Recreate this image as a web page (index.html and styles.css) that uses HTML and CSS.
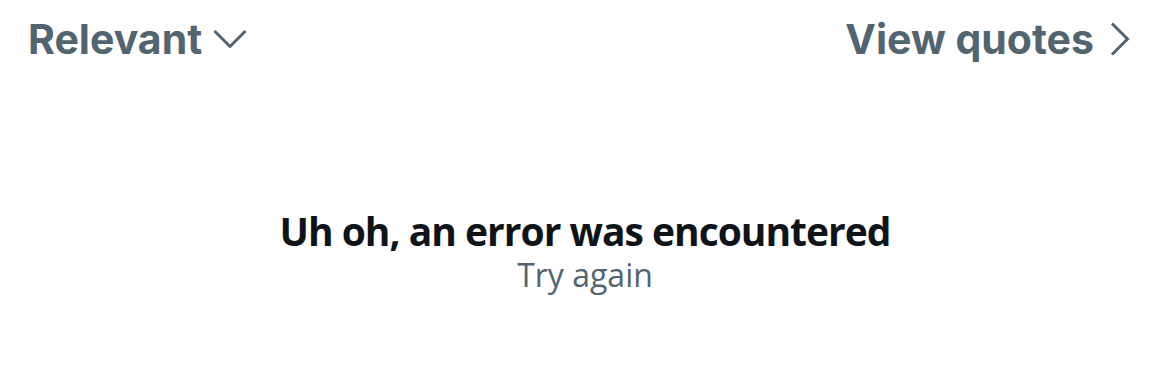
FILE: index.html
```html
<!DOCTYPE html>
<html lang="en">
<head>
    <meta charset="UTF-8">
    <title>Replies</title>
    <link rel="stylesheet" href="styles.css">
</head>
<body>
    <div class="toolbar">
        <button class="sort">
            Relevant
            <svg class="chev" viewBox="0 0 34 20" width="34" height="20"><path d="M1.5 2 L17 17.5 L32.5 2" fill="none" stroke="currentColor" stroke-width="3"/></svg>
        </button>
        <button class="quotes">
            View quotes
            <svg class="chev" viewBox="0 0 20 34" width="20" height="34"><path d="M2 1.5 L17.5 17 L2 32.5" fill="none" stroke="currentColor" stroke-width="3"/></svg>
        </button>
    </div>

    <div class="error">
        <div class="error-title">Uh oh, an error was encountered</div>
        <div class="error-retry">Try again</div>
    </div>
</body>
</html>
```

FILE: styles.css
```css
body {
    margin: 0;
    background: #ffffff;
    font-family: "Inter", "Noto Sans", sans-serif;
}
.toolbar {
    display: flex;
    justify-content: space-between;
    align-items: center;
    padding: 14px 40px 0 28px;
}
.toolbar button {
    display: flex;
    align-items: center;
    background: none;
    border: none;
    padding: 0;
    color: #536471;
    font-family: "Inter", sans-serif;
    font-weight: 700;
    font-size: 41px;
    cursor: pointer;
}
.sort {
    gap: 11px;
}
.quotes {
    gap: 16px;
}
.error {
    display: flex;
    flex-direction: column;
    align-items: center;
    margin-top: 144px;
}
.error-title {
    color: #0f1419;
    font-family: "Open Sans", sans-serif;
    font-weight: 700;
    font-size: 39px;
    letter-spacing: -1px;
    line-height: 46px;
}
.error-retry {
    color: #536471;
    font-family: "Open Sans", sans-serif;
    font-size: 32px;
    line-height: 42px;
}
```
